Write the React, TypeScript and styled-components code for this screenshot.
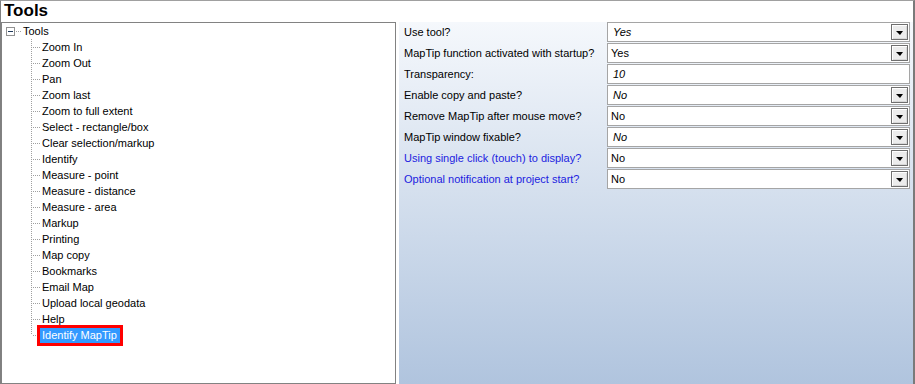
import React from "react";
import styled, { createGlobalStyle } from "styled-components";

const Global = createGlobalStyle`
  html, body { margin: 0; padding: 0; background: #ffffff; }
  body { font-family: "Liberation Sans", Arial, sans-serif; }
  * { box-sizing: border-box; }
`;

const Frame = styled.div`
  width: 915px;
  height: 384px;
  border-top: 1px solid #a0a0a0;
  border-left: 1px solid #808080;
  border-right: 2px solid #7a7a7a;
  background: #ffffff;
  display: flex;
  flex-direction: column;
  overflow: hidden;
`;

const Header = styled.div`
  height: 21px;
  padding-left: 3px;
  font-family: "Liberation Sans", Arial, sans-serif;
  font-weight: bold;
  font-size: 17px;
  line-height: 20px;
  color: #000;
`;

const Body = styled.div`
  flex: 1;
  display: flex;
  gap: 3px;
  min-height: 0;
`;

const TreeBox = styled.div`
  width: 395px;
  border: 1px solid #828282;
  background: #fff;
  font-family: "Liberation Sans", Arial, sans-serif;
  font-size: 11px;
  color: #000;
`;

const RootRow = styled.div`
  height: 16px;
  display: flex;
  align-items: center;
  padding-left: 4px;
`;

const Expander = styled.div`
  width: 9px;
  height: 9px;
  border: 1px solid #919191;
  background: #fff;
  display: flex;
  align-items: center;
  justify-content: center;
  &::before {
    content: "";
    width: 5px;
    height: 1px;
    background: #1e395b;
  }
`;

const RootLabel = styled.span`
  padding-left: 1px;
  line-height: 16px;
`;

const Children = styled.div`
  padding-left: 29px;
`;

const ChildRow = styled.div`
  height: 16px;
  display: flex;
  align-items: center;
`;

const ItemLabel = styled.span<{ $selected?: boolean }>`
  padding: 0 3px 0 2px;
  height: 15px;
  line-height: 15px;
  white-space: nowrap;
  background: ${(p) => (p.$selected ? "#3399ff" : "transparent")};
  color: ${(p) => (p.$selected ? "#ffffff" : "#000000")};
  outline: ${(p) => (p.$selected ? "3px solid #ff0000" : "none")};
`;

const Panel = styled.div`
  flex: 1;
  background: linear-gradient(to bottom, #f5f8fc 0%, #b0c4de 100%);
  padding: 0 0 0 5px;
  display: grid;
  grid-template-columns: 203px 303px;
  grid-auto-rows: 20px;
  row-gap: 1px;
  align-content: start;
  font-family: "Liberation Sans", Arial, sans-serif;
  font-size: 11px;
`;

const Label = styled.div<{ $blue?: boolean }>`
  line-height: 20px;
  white-space: nowrap;
  color: ${(p) => (p.$blue ? "#1c1ce0" : "#000000")};
`;

const Field = styled.div`
  border: 1px solid #a5a5a5;
  background: #ffffff;
  display: flex;
  align-items: center;
  padding-right: 1px;
`;

const Value = styled.span<{ $italic?: boolean }>`
  flex: 1;
  padding-left: ${(p) => (p.$italic ? "5px" : "3px")};
  font-style: ${(p) => (p.$italic ? "italic" : "normal")};
  color: #000;
  line-height: 18px;
`;

const DropButton = styled.div`
  width: 17px;
  height: 16px;
  border: 1px solid #6f6f6f;
  box-shadow: inset 1px 1px 0 #ffffff, inset -1px -1px 0 #d8d8d8;
  background: #ececec;
  display: flex;
  align-items: center;
  justify-content: center;
  &::before {
    content: "";
    width: 0;
    height: 0;
    border-left: 4px solid transparent;
    border-right: 3px solid transparent;
    border-top: 4px solid #000;
    margin-top: 1px;
  }
`;

const Connector = ({ last }: { last?: boolean }) => (
  <svg width="9" height="16" style={{ display: "block", flex: "none" }} shapeRendering="crispEdges">
    <line x1="0.5" y1="0" x2="0.5" y2={last ? 8 : 16} stroke="#a0a0a0" strokeDasharray="1 1" />
    <line x1="2" y1="8.5" x2="9" y2="8.5" stroke="#a0a0a0" strokeDasharray="1 1" />
  </svg>
);

const RootConnector = () => (
  <svg width="7" height="16" style={{ display: "block", flex: "none" }} shapeRendering="crispEdges">
    <line x1="1" y1="8.5" x2="7" y2="8.5" stroke="#a0a0a0" strokeDasharray="1 1" />
  </svg>
);

const items = [
  "Zoom In",
  "Zoom Out",
  "Pan",
  "Zoom last",
  "Zoom to full extent",
  "Select - rectangle/box",
  "Clear selection/markup",
  "Identify",
  "Measure - point",
  "Measure - distance",
  "Measure - area",
  "Markup",
  "Printing",
  "Map copy",
  "Bookmarks",
  "Email Map",
  "Upload local geodata",
  "Help",
  "Identify MapTip",
];

type Prop = { label: string; value: string; italic?: boolean; blue?: boolean; dropdown?: boolean };

const props: Prop[] = [
  { label: "Use tool?", value: "Yes", italic: true, dropdown: true },
  { label: "MapTip function activated with startup?", value: "Yes", dropdown: true },
  { label: "Transparency:", value: "10", italic: true },
  { label: "Enable copy and paste?", value: "No", italic: true, dropdown: true },
  { label: "Remove MapTip after mouse move?", value: "No", dropdown: true },
  { label: "MapTip window fixable?", value: "No", italic: true, dropdown: true },
  { label: "Using single click (touch) to display?", value: "No", blue: true, dropdown: true },
  { label: "Optional notification at project start?", value: "No", blue: true, dropdown: true },
];

export default function App() {
  return (
    <>
      <Global />
      <Frame>
        <Header>Tools</Header>
        <Body>
          <TreeBox>
            <RootRow>
              <Expander />
              <RootConnector />
              <RootLabel>Tools</RootLabel>
            </RootRow>
            <Children>
              {items.map((it, i) => (
                <ChildRow key={it}>
                  <Connector last={i === items.length - 1} />
                  <ItemLabel $selected={i === items.length - 1}>{it}</ItemLabel>
                </ChildRow>
              ))}
            </Children>
          </TreeBox>
          <Panel>
            {props.map((p) => (
              <React.Fragment key={p.label}>
                <Label $blue={p.blue}>{p.label}</Label>
                <Field>
                  <Value $italic={p.italic}>{p.value}</Value>
                  {p.dropdown && <DropButton />}
                </Field>
              </React.Fragment>
            ))}
          </Panel>
        </Body>
      </Frame>
    </>
  );
}
